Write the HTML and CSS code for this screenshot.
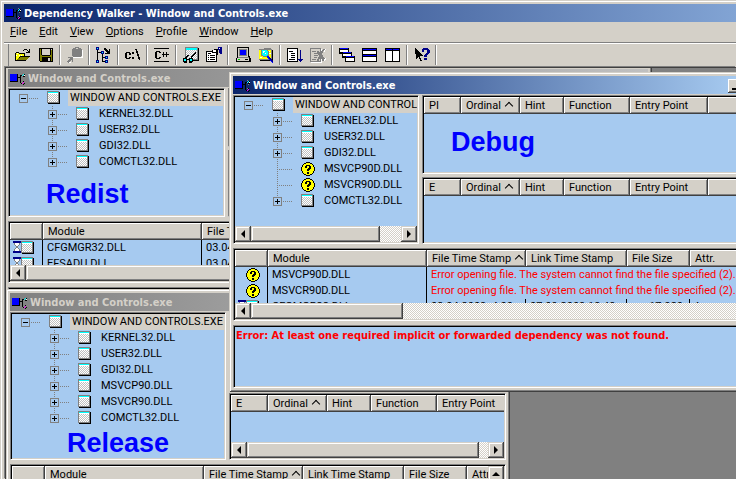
FILE: index.html
```html
<!DOCTYPE html>
<html lang="en">
<head>
<meta charset="utf-8">
<title>Dependency Walker - Window and Controls.exe</title>
<link rel="stylesheet" href="styles.css">
</head>
<body>
<svg class="defs" aria-hidden="true">
  <defs>
    <pattern id="check" width="2" height="2" patternUnits="userSpaceOnUse">
      <path fill="#fff" d="M0 0h2v2h-2z"/><path fill="#c0c0c0" d="M0 0h1v1h-1zM1 1h1v1h-1z"/>
    </pattern>
    <symbol id="logo" viewBox="0 0 16 16">
      <path fill="#000" d="M0 3h8v8h-8zM8 6h3v1h-3zM10 4h1v8h-1zM11 4h1v1h-1zM11 12h1v1h-1z"/>
      <path fill="#00f" d="M0 3h7v7h-7z"/>
      <path fill="#808080" d="M12 2h1v1h-1zM12 10h1v1h-1zM13 6h1v1h-1z"/>
      <path fill="#0ff" d="M13 3h1v1h-1zM12 4h1v1h-1z"/><path fill="#fff" d="M14 4h1v1h-1z"/>
      <path fill="#000" d="M13 5h1v1h-1zM14 5h1v1h-1zM14 3h1v1h-1zM13 13h1v1h-1zM14 12h1v1h-1zM13 10h1v1h-1z"/>
      <path fill="#f0f" d="M13 11h1v1h-1zM12 12h1v1h-1z"/>
    </symbol>
    <symbol id="doc" viewBox="0 0 14 14">
      <path fill="#000" d="M1 1h12v12h-12z"/><path fill="#808080" d="M0 0h12v12h-12z"/>
      <path fill="url(#check)" d="M1 1h10v10h-10z"/><path fill="#0ff" d="M1 1h10v1h-10z"/><path fill="#fff" d="M1 2h10v1h-10z"/>
    </symbol>
    <symbol id="missing" viewBox="0 0 14 14">
      <path fill="#000" d="M5 0h4v1h2v1h1v1h1v2h1v4h-1v2h-1v1h-1v1h-2v1h-4v-1h-2v-1h-1v-1h-1v-2h-1v-4h1v-2h1v-1h1v-1h2z"/>
      <path fill="#ff0" d="M5 1h4v1h2v1h1v2h1v4h-1v2h-1v1h-2v1h-4v-1h-2v-1h-1v-2h-1v-4h1v-2h1v-1h2z"/>
      <path fill="#000" d="M5 3h4v1h1v3h-1v1h-1v1h-2v-2h1v-1h1v-2h-2v2h-2v-2h1zM6 10h2v2h-2z"/>
    </symbol>
    <symbol id="delay" viewBox="0 0 8 12">
      <path fill="#808080" d="M1 2h6v2h-1v1h-1v2h1v1h1v2h-6v-2h1v-1h1v-2h-1v-1h-1z"/>
      <path fill="#fff" d="M2 2h4v2h-1v1h-2v-1h-1zM3 7h2v1h1v2h-4v-2h1z"/>
      <path fill="#008" d="M0 0h8v2h-8zM0 10h8v2h-8z"/>
    </symbol>
    <symbol id="i-open" viewBox="0 0 16 16">
      <path fill="#000" d="M9 2h3v1h-3zM8 3h1v1h-1zM12 3h1v1h-1zM14 2h1v4h-4v-1h2v-1h1zM1 5h3v1h6v3h5v1h-1v1h-1v1h-1v1h-1v1h-11v-8h1z"/>
      <path fill="#ff0" d="M1 6h3v1h5v2h-4v1h-1v1h-1v1h-1v1h-1z"/><path fill="#fff" d="M2 6h1v1h-1zM1 8h1v1h-1zM4 8h1v1h-1zM6 8h1v1h-1z"/>
      <path fill="#808000" d="M5 10h9v1h-1v1h-1v1h-10v-1h1v-1h2z"/>
    </symbol>
    <symbol id="i-save" viewBox="0 0 16 16">
      <path fill="#000" d="M1 1h14v14h-13v-1h-1z"/><path fill="#808000" d="M2 2h12v12h-12z"/>
      <path fill="#000" d="M3 2h1v6h-1zM12 2h1v6h-1zM4 8h8v1h-8zM4 10h9v4h-9z"/><path fill="#d4d0c8" d="M4 2h8v6h-8zM10 11h2v3h-2zM13 2h1v1h-1z"/>
    </symbol>
    <symbol id="i-profile" viewBox="0 0 16 16">
      <path fill="#fff" d="M5 10h10v1h-10zM15 3h1v8h-1zM1 16h3v-1h-3z"/>
      <path fill="#808080" d="M6 1h2v-1h4v1h2v1h1v7h-1v1h-8v-1h-1v-7h1zM1 10h5v5h-1v-2h-1v1h-1v1h-1v1h-1v-1h-1v-1h1v-1h1v-1h1v-1h-2z"/>
      <path fill="#d4d0c8" d="M9 1h2v1h-2z"/>
    </symbol>
    <symbol id="i-tree" viewBox="0 0 16 16">
      <path fill="#000" d="M1 3h1v12h-1zM1 5h4v1h-4zM6 7h1v7h-1zM6 10h4v1h-4zM6 14h4v1h-4zM8 1h2v1h1v1h1v1h1v-2h1v5h-5v-1h2v-1h-1v-1h-1v-1h-1z"/>
      <path fill="#008" d="M0 0h3v3h-3zM5 4h3v3h-3zM9 9h3v3h-3zM9 13h3v3h-3zM0 13h3v3h-3z"/>
      <path fill="#0ff" d="M1 1h1v1h-1zM6 5h1v1h-1zM10 10h1v1h-1zM10 14h1v1h-1zM1 14h1v1h-1z"/>
    </symbol>
    <symbol id="i-path" viewBox="0 0 16 16">
      <path fill="#000" d="M1 5h4v1h1v2h-2v-2h-2v5h2v-1h2v1h-1v1h-4v-1h-1v-5h1zM7 5h2v2h-2zM7 10h2v2h-2zM10 2h2v2h1v3h1v3h1v3h-1v-1h-1v-3h-1v-3h-1v-3h-1z"/>
    </symbol>
    <symbol id="i-cpp" viewBox="0 0 17 16">
      <path fill="#000" d="M0 1h16v1h-16zM0 14h16v1h-16zM2 4h4v1h1v1h-2v-1h-2v6h2v-1h2v1h-1v1h-4v-1h-1v-6h1zM8 7h2v-2h1v2h1v1h-1v2h-1v-2h-2zM12 7h1v-2h1v2h2v1h-2v2h-1v-2h-1z"/>
    </symbol>
    <symbol id="i-full" viewBox="0 0 16 16">
      <path fill="#000" d="M15 1h1v13h-9v-1h8z"/><path fill="#808080" d="M2 0h13v13h-13z"/><path fill="url(#check)" d="M3 3h11v9h-11z"/><path fill="#0ff" d="M3 1h11v2h-11z"/>
      <path fill="#000" d="M12 5h1v2h-1v1h-1v1h-1v1h-1v1h-1v-2h1v-1h1v-1h1v-1h1zM4 8h2v1h-1v1h-1v1h-2v-1h1v-1h1zM0 11h4v1h2v-1h4v4h-1v1h-3v-3h-2v3h-3v-1h-1z"/>
      <path fill="#0ff" d="M1 12h2v2h-2zM7 12h2v2h-2z"/>
    </symbol>
    <symbol id="i-props" viewBox="0 0 16 16">
      <path fill="#000" d="M0 4h6v-1h2v-1h4v6h-1v7h-11z"/><path fill="#fff" d="M1 5h5v1h4v8h-9zM7 3h3v2h-3z"/>
      <path fill="#000" d="M2 6h3v1h-3zM2 8h1v1h-1zM4 8h5v1h-5zM2 10h1v1h-1zM4 10h5v1h-5zM2 12h1v1h-1zM4 12h5v1h-5zM7 5h2v1h-2zM6 4h1v1h-1z"/>
      <path fill="#008" d="M12 0h4v7h-2v-1h-1v-3h-1z"/><path fill="#fff" d="M13 1h1v1h-1z"/>
    </symbol>
    <symbol id="i-pc" viewBox="0 0 16 16">
      <path fill="#000" d="M2 0h12v9h1v2h1v4h-15v-4h1z"/><path fill="#d4d0c8" d="M3 1h10v9h-10zM2 11h12v3h-12z"/><path fill="#808080" d="M4 2h8v7h-8zM3 10h11v1h-11z"/>
      <path fill="#00f" d="M5 3h6v5h-6z"/><path fill="#000" d="M10 12h3v1h-3z"/><path fill="#0c0" d="M3 12h2v1h-2z"/>
    </symbol>
    <symbol id="i-search" viewBox="0 0 16 16">
      <path fill="#000" d="M14 3h1v11h-13v-1h12z"/><path fill="#808080" d="M1 2h5v-1h7v1h1v11h-13z"/><path fill="#ff0" d="M1 3h12v9h-12z"/><path fill="#fff" d="M10 4h2v1h-2zM11 6h2v1h-2zM2 10h2v1h-2z"/>
      <path fill="#808080" d="M4 2h5v1h1v1h1v5h-1v1h-5v-1h-2v-6h1z"/><path fill="#0ff" d="M4 3h5v1h1v4h-1v1h-4v-1h-1z"/><path fill="#fff" d="M5 4h2v1h-1v1h-1zM7 6h1v1h-1z"/>
      <path fill="#00f" d="M9 9h2v1h1v1h1v1h1v1h1v3h-1v-1h-1v-1h-1v-1h-1v-1h-1v-1h-1z"/><path fill="#008" d="M11 10h1v1h1v1h1v1h1v2h-1v-1h-1v-1h-1v-1h-1z"/>
    </symbol>
    <symbol id="i-expand" viewBox="0 0 16 16">
      <path fill="#000" d="M0 1h11v14h-11z"/><path fill="#fff" d="M1 2h9v12h-9z"/><path fill="#000" d="M2 4h4v1h-4zM4 6h4v1h-4zM4 8h4v1h-4zM4 10h4v1h-4zM2 12h6v1h-6z"/>
      <path fill="#008" d="M13 3h1v9h2v1h-1v1h-1v1h-1v-1h-1v-1h-1v-1h2z"/>
    </symbol>
    <symbol id="i-noexp" viewBox="0 0 16 16">
      <path fill="#fff" d="M1 2h11v14h-11zM14 2h2v1h-1v2h-1zM13 11h3v2h-1v1h-2z"/><path fill="#808080" d="M0 1h11v14h-11z"/><path fill="#d4d0c8" d="M1 2h9v12h-9z"/>
      <path fill="#808080" d="M2 4h4v1h-4zM4 6h3v1h-3zM4 8h4v1h-4zM4 10h3v1h-3zM2 12h4v1h-4zM7 4h2v1h1v1h1v-2h1v-1h1v-1h2v1h-1v1h-1v2h-1v2h1v2h1v1h1v1h-1v2h-2v-2h-1v-2h-1v2h-1v2h-2v-2h1v-2h1v-2h-1v-1h-1z"/>
    </symbol>
    <symbol id="i-cascade" viewBox="0 0 16 16">
      <path fill="#000" d="M0 1h10v6h-10zM3 5h10v6h-10zM6 9h10v6h-10z"/><path fill="#fff" d="M1 3h8v2h-8zM4 7h8v2h-8zM7 11h8v3h-8z"/><path fill="#00f" d="M1 1h8v1h-8zM4 5h8v1h-8zM7 9h8v1h-8z"/>
    </symbol>
    <symbol id="i-rows" viewBox="0 0 16 16">
      <path fill="#000" d="M0 1h15v14h-15z"/><path fill="#fff" d="M1 4h13v3h-13zM1 10h13v4h-13z"/><path fill="#00f" d="M1 2h13v1h-13zM1 8h13v1h-13z"/>
    </symbol>
    <symbol id="i-cols" viewBox="0 0 16 16">
      <path fill="#000" d="M0 1h15v14h-15z"/><path fill="#fff" d="M1 4h6v10h-6zM8 4h6v10h-6z"/><path fill="#00f" d="M1 2h6v1h-6zM8 2h6v1h-6z"/>
    </symbol>
    <symbol id="i-help" viewBox="0 0 16 16">
      <path fill="#000" d="M1 1h1v1h1v1h1v1h1v1h1v1h1v1h1v1h1v1h-3v2h1v2h1v1h-2v-2h-1v-2h-1v1h-1v1h-1z"/>
      <path fill="#008" d="M9 1h5v1h1v1h1v3h-1v1h-1v1h-1v2h-3v-2h1v-1h1v-1h1v-3h-3v2h-2v-3h1zM10 11h3v2h-3z"/>
    </symbol>
  </defs>
</svg>

<main class="app">
  <header class="title app-title"><svg class="logo"><use href="#logo"/></svg><h1>Dependency Walker - Window and Controls.exe</h1></header>
  <nav class="menu">
    <button><u>F</u>ile</button><button><u>E</u>dit</button><button><u>V</u>iew</button><button><u>O</u>ptions</button><button><u>P</u>rofile</button><button><u>W</u>indow</button><button><u>H</u>elp</button>
  </nav>
  <div class="toolbar">
    <button aria-label="Open"><svg><use href="#i-open"/></svg></button><button aria-label="Save"><svg><use href="#i-save"/></svg></button><i class="sep"></i>
    <button aria-label="Start profiling" disabled><svg><use href="#i-profile"/></svg></button><i class="sep"></i>
    <button aria-label="Auto expand"><svg><use href="#i-tree"/></svg></button><i class="sep"></i>
    <button aria-label="Full paths"><svg><use href="#i-path"/></svg></button><i class="sep"></i>
    <button aria-label="Undecorate C++ functions"><svg><use href="#i-cpp"/></svg></button><i class="sep"></i>
    <button aria-label="External viewer"><svg><use href="#i-full"/></svg></button><button aria-label="Properties"><svg><use href="#i-props"/></svg></button><i class="sep"></i>
    <button aria-label="System information"><svg><use href="#i-pc"/></svg></button><button aria-label="Search order"><svg><use href="#i-search"/></svg></button><i class="sep"></i>
    <button aria-label="Next match"><svg><use href="#i-expand"/></svg></button><button aria-label="Clear log" disabled><svg><use href="#i-noexp"/></svg></button><i class="sep"></i>
    <button aria-label="Cascade"><svg><use href="#i-cascade"/></svg></button><button aria-label="Tile horizontally"><svg><use href="#i-rows"/></svg></button><button aria-label="Tile vertically"><svg><use href="#i-cols"/></svg></button><i class="sep"></i>
    <button aria-label="Context help"><svg><use href="#i-help"/></svg></button><i class="sep"></i>
  </div>

  <div class="desktop">
    <section class="window redist">
      <header class="title"><svg class="logo"><use href="#logo"/></svg><h2>Window and Controls.exe</h2><button class="cap" aria-label="Minimize"></button><button class="cap" aria-label="Maximize"></button><button class="cap close" aria-label="Close"></button></header>
      <div class="upper">
        <div class="pane tree-pane">
          <ul class="tree">
            <li><div class="node"><button class="exp" aria-label="Collapse"></button><i class="dots"></i><svg><use href="#doc"/></svg><span class="selected">WINDOW AND CONTROLS.EXE</span></div>
              <ul>
                <li class="node"><button class="exp plus" aria-label="Expand"></button><i class="dots"></i><svg><use href="#doc"/></svg><span>KERNEL32.DLL</span></li>
                <li class="node"><button class="exp plus" aria-label="Expand"></button><i class="dots"></i><svg><use href="#doc"/></svg><span>USER32.DLL</span></li>
                <li class="node"><button class="exp plus" aria-label="Expand"></button><i class="dots"></i><svg><use href="#doc"/></svg><span>GDI32.DLL</span></li>
                <li class="node"><button class="exp plus" aria-label="Expand"></button><i class="dots"></i><svg><use href="#doc"/></svg><span>COMCTL32.DLL</span></li>
              </ul>
            </li>
          </ul>
          <strong class="note">Redist</strong>
        </div>
        <div class="side"><div class="pane"></div><div class="pane"></div></div>
      </div>
      <div class="pane">
        <div class="view">
          <table class="modules">
            <colgroup><col class="c-icon"><col class="c-module"><col class="c-file"><col class="c-link"><col class="c-size"><col></colgroup>
            <thead><tr><th></th><th>Module</th><th>File Time Stamp <b class="sort"></b></th><th></th><th></th><th></th></tr></thead>
            <tbody>
              <tr><td><svg class="delay"><use href="#delay"/></svg><svg><use href="#doc"/></svg></td><td>CFGMGR32.DLL</td><td>03.04.2008</td><td></td><td></td><td></td></tr>
              <tr><td><svg class="delay"><use href="#delay"/></svg><svg><use href="#doc"/></svg></td><td>EFSADU.DLL</td><td>03.04.2008</td><td></td><td></td><td></td></tr>
            </tbody>
          </table>
        </div>
        <div class="scroll"><button class="arrow left" aria-label="Scroll left"></button><i class="thumb"></i><button class="arrow right" aria-label="Scroll right"></button></div>
      </div>
      <div class="pane"></div>
    </section>

    <section class="window release">
      <header class="title"><svg class="logo"><use href="#logo"/></svg><h2>Window and Controls.exe</h2></header>
      <div class="upper">
        <div class="pane tree-pane">
          <ul class="tree">
            <li><div class="node"><button class="exp" aria-label="Collapse"></button><i class="dots"></i><svg><use href="#doc"/></svg><span class="selected">WINDOW AND CONTROLS.EXE</span></div>
              <ul>
                <li class="node"><button class="exp plus" aria-label="Expand"></button><i class="dots"></i><svg><use href="#doc"/></svg><span>KERNEL32.DLL</span></li>
                <li class="node"><button class="exp plus" aria-label="Expand"></button><i class="dots"></i><svg><use href="#doc"/></svg><span>USER32.DLL</span></li>
                <li class="node"><button class="exp plus" aria-label="Expand"></button><i class="dots"></i><svg><use href="#doc"/></svg><span>GDI32.DLL</span></li>
                <li class="node"><button class="exp plus" aria-label="Expand"></button><i class="dots"></i><svg><use href="#doc"/></svg><span>MSVCP90.DLL</span></li>
                <li class="node"><button class="exp plus" aria-label="Expand"></button><i class="dots"></i><svg><use href="#doc"/></svg><span>MSVCR90.DLL</span></li>
                <li class="node"><button class="exp plus" aria-label="Expand"></button><i class="dots"></i><svg><use href="#doc"/></svg><span>COMCTL32.DLL</span></li>
              </ul>
            </li>
          </ul>
          <strong class="note">Release</strong>
        </div>
        <div class="side">
          <div class="pane"></div>
          <div class="pane">
            <div class="view">
              <table class="functions">
                <colgroup><col class="c-kind"><col class="c-ordinal"><col class="c-hint"><col class="c-function"><col class="c-entry"><col></colgroup>
                <thead><tr><th>E</th><th>Ordinal <b class="sort"></b></th><th>Hint</th><th>Function</th><th>Entry Point</th><th></th></tr></thead>
              </table>
            </div>
            <div class="scroll"><button class="arrow left" aria-label="Scroll left"></button><i class="thumb"></i><button class="arrow right" aria-label="Scroll right"></button></div>
          </div>
        </div>
      </div>
      <div class="pane with-vscroll">
        <div class="view">
          <table class="modules">
            <colgroup><col class="c-icon"><col class="c-module"><col class="c-file"><col class="c-link"><col class="c-size"><col></colgroup>
            <thead><tr><th></th><th>Module</th><th>File Time Stamp <b class="sort"></b></th><th>Link Time Stamp</th><th>File Size</th><th>Attr.</th></tr></thead>
          </table>
        </div>
        <div class="vscroll"><button class="arrow up" aria-label="Scroll up"></button></div>
      </div>
    </section>

    <section class="window active debug">
      <header class="title"><svg class="logo"><use href="#logo"/></svg><h2>Window and Controls.exe</h2><button class="cap min" aria-label="Minimize"></button><button class="cap" aria-label="Maximize"></button><button class="cap close" aria-label="Close"></button></header>
      <div class="upper">
        <div class="pane tree-pane">
          <ul class="tree view">
            <li><div class="node"><button class="exp" aria-label="Collapse"></button><i class="dots"></i><svg><use href="#doc"/></svg><span class="selected">WINDOW AND CONTROLS.EXE</span></div>
              <ul>
                <li class="node"><button class="exp plus" aria-label="Expand"></button><i class="dots"></i><svg><use href="#doc"/></svg><span>KERNEL32.DLL</span></li>
                <li class="node"><button class="exp plus" aria-label="Expand"></button><i class="dots"></i><svg><use href="#doc"/></svg><span>USER32.DLL</span></li>
                <li class="node"><button class="exp plus" aria-label="Expand"></button><i class="dots"></i><svg><use href="#doc"/></svg><span>GDI32.DLL</span></li>
                <li class="node leaf"><i class="dots"></i><svg><use href="#missing"/></svg><span>MSVCP90D.DLL</span></li>
                <li class="node leaf"><i class="dots"></i><svg><use href="#missing"/></svg><span>MSVCR90D.DLL</span></li>
                <li class="node"><button class="exp plus" aria-label="Expand"></button><i class="dots"></i><svg><use href="#doc"/></svg><span>COMCTL32.DLL</span></li>
              </ul>
            </li>
          </ul>
          <div class="scroll"><button class="arrow left" aria-label="Scroll left"></button><i class="thumb"></i><button class="arrow right" aria-label="Scroll right"></button></div>
        </div>
        <div class="side">
          <div class="pane">
            <div class="view">
              <table class="functions">
                <colgroup><col class="c-kind"><col class="c-ordinal"><col class="c-hint"><col class="c-function"><col class="c-entry"><col></colgroup>
                <thead><tr><th>PI</th><th>Ordinal <b class="sort"></b></th><th>Hint</th><th>Function</th><th>Entry Point</th><th></th></tr></thead>
              </table>
            </div>
            <strong class="note">Debug</strong>
          </div>
          <div class="pane">
            <div class="view">
              <table class="functions">
                <colgroup><col class="c-kind"><col class="c-ordinal"><col class="c-hint"><col class="c-function"><col class="c-entry"><col></colgroup>
                <thead><tr><th>E</th><th>Ordinal <b class="sort"></b></th><th>Hint</th><th>Function</th><th>Entry Point</th><th></th></tr></thead>
              </table>
            </div>
          </div>
        </div>
      </div>
      <div class="pane">
        <div class="view">
          <table class="modules">
            <colgroup><col class="c-icon"><col class="c-module"><col class="c-file"><col class="c-link"><col class="c-size"><col></colgroup>
            <thead><tr><th></th><th>Module</th><th>File Time Stamp <b class="sort"></b></th><th>Link Time Stamp</th><th>File Size</th><th>Attr.</th></tr></thead>
            <tbody>
              <tr><td><svg class="alone"><use href="#missing"/></svg></td><td>MSVCP90D.DLL</td><td class="error" colspan="4">Error opening file. The system cannot find the file specified (2).</td></tr>
              <tr><td><svg class="alone"><use href="#missing"/></svg></td><td>MSVCR90D.DLL</td><td class="error" colspan="4">Error opening file. The system cannot find the file specified (2).</td></tr>
              <tr><td><svg class="delay"><use href="#delay"/></svg><svg><use href="#doc"/></svg></td><td>CFGMGR32.DLL</td><td>03.04.2008  4:00</td><td>07.09.2008 18:48</td><td class="num">17.920</td><td>A</td></tr>
            </tbody>
          </table>
        </div>
        <div class="scroll"><button class="arrow left" aria-label="Scroll left"></button><i class="thumb"></i><button class="arrow right" aria-label="Scroll right"></button></div>
      </div>
      <div class="pane log"><p>Error: At least one required implicit or forwarded dependency was not found.</p></div>
    </section>
  </div>
</main>
</body>
</html>
```
FILE: styles.css
```css
:root {
  --face: #d4d0c8;
  --shade: #808080;
  --dark: #404040;
  --paper: #a6caf0;
  --bold-face: "DejaVu Sans Condensed", "DejaVu Sans", sans-serif;
}
* { box-sizing: border-box; }
html, body { height: 100%; margin: 0; }
body {
  overflow: hidden;
  background: var(--face);
  color: #000;
  font: 11px/16px Roboto, "DejaVu Sans", sans-serif;
}
button { margin: 0; padding: 0; border: 0; background: none; color: inherit; font: inherit; }
h1, h2, p, ul { margin: 0; padding: 0; font-size: inherit; list-style: none; }
svg { display: block; flex: none; shape-rendering: crispEdges; }
.defs { position: absolute; width: 0; height: 0; }

/* Application frame */
.app {
  display: flex;
  flex-direction: column;
  height: 100%;
  padding: 4px 0 0 4px;
  box-shadow: inset 1px 1px var(--face), inset 2px 2px #fff;
}
.title {
  display: flex;
  flex: none;
  align-items: center;
  height: 18px;
  padding: 1px 2px 0;
  background: linear-gradient(90deg, #808080, #c0c0c0);
  color: var(--face);
  font-family: var(--bold-face);
  white-space: nowrap;
}
.title h1, .title h2 { flex: 1; font-weight: bold; }
.app-title { background: linear-gradient(90deg, #0a246a, #82a4d4); color: #fff; }
.logo { width: 16px; height: 16px; margin-right: 2px; }
.menu { display: flex; flex: none; height: 20px; }
.menu button { padding: 0 6px; }
.toolbar {
  display: flex;
  flex: none;
  align-items: center;
  height: 24px;
  padding-left: 7px;
  border-top: 1px solid var(--shade);
  box-shadow: inset 0 1px #fff, inset 4px 0 var(--face), inset 5px 0 var(--shade);
}
.toolbar button { display: flex; flex: none; justify-content: center; width: 23px; }
.toolbar svg { width: 16px; height: 16px; }
.sep { flex: none; width: 6px; height: 20px; border: solid var(--face); border-width: 0 2px; background: linear-gradient(90deg, var(--shade) 50%, #fff 50%); }

/* Child windows */
.desktop {
  position: relative;
  flex: 1;
  min-height: 0;
  margin: 1px 0 0 1px;
  overflow: hidden;
  border: solid var(--dark);
  border-width: 1px 0 0 1px;
  background: var(--shade);
  box-shadow: -1px -1px var(--shade);
}
.window {
  position: absolute;
  display: grid;
  padding: 4px;
  background: var(--face);
  box-shadow: inset 1px 1px var(--face), inset -1px -1px var(--dark), inset 2px 2px #fff, inset -2px -2px var(--shade);
}
.window > .title { margin-bottom: 1px; }
.window > .upper, .window > .upper ~ .pane:not(:last-child) { margin-bottom: 4px; }
.active > .title { background: linear-gradient(90deg, #0a246a, #a6caf0 92%); color: #fff; }
.redist { left: -2px; top: -3px; width: 648px; grid-template-rows: 19px 133px 66px 40px; }
.release { left: 0; top: 221px; width: 504px; grid-template-rows: 19px 152px 80px; }
.debug { left: 223px; top: 4px; width: 555px; grid-template-rows: 19px 153px 77px 63px; }
.cap {
  width: 16px;
  height: 14px;
  background: var(--face);
  box-shadow: inset -1px -1px var(--dark), inset 1px 1px #fff, inset -2px -2px var(--shade);
}
.cap.min::before { content: ""; display: block; width: 6px; height: 2px; margin: 7px 0 0 4px; background: #000; }
.close { margin-left: 2px; }

/* Sunken panes */
.upper { display: grid; gap: 3px; min-height: 0; }
.redist .upper { grid-template-columns: 217px 1fr; }
.release .upper { grid-template-columns: 216px 1fr; }
.debug .upper { grid-template-columns: 186px 1fr; }
.side { display: grid; grid-template-rows: 1fr 67px; gap: 3px; min-width: 0; }
.pane {
  position: relative;
  display: flex;
  flex-direction: column;
  min-width: 0;
  min-height: 0;
  padding: 1px;
  overflow: hidden;
  border: 1px solid;
  border-color: var(--shade) #fff #fff var(--shade);
  background: var(--paper);
  box-shadow: inset 1px 1px #000, inset -1px -1px var(--face);
}
.with-vscroll { flex-direction: row; }
.view { flex: 1; min-width: 0; min-height: 0; overflow: hidden; }
.note { position: absolute; color: #00f; font: bold 27px/32px "Liberation Sans", Arial, sans-serif; }
.redist .note { left: 37px; top: 89px; }
.release .note { left: 56px; top: 114px; }
.debug .note { left: 28px; top: 30px; }
.log p { padding: 1px 1px 0; color: #f00; font-family: var(--bold-face); font-weight: bold; white-space: nowrap; }

/* Module tree */
.node { display: flex; align-items: center; height: 16px; padding-left: 9px; white-space: nowrap; }
.node svg { width: 14px; height: 14px; margin: 0 7px 0 8px; }
.node span { padding: 0 2px; }
.node .selected { background: var(--face); }
.tree ul { background: repeating-linear-gradient(var(--shade) 0 1px, transparent 1px 2px) 42px 0 / 1px calc(100% - 8px) no-repeat; }
.tree ul .node { padding-left: 38px; }
.tree ul .leaf { padding-left: 43px; }
.exp {
  flex: none;
  width: 9px;
  height: 9px;
  border: 1px solid var(--shade);
  background: linear-gradient(#000, #000) 1px 3px / 5px 1px no-repeat var(--paper);
}
.plus { background: linear-gradient(#000, #000) 1px 3px / 5px 1px no-repeat, linear-gradient(#000, #000) 3px 1px / 1px 5px no-repeat var(--paper); }
.dots { flex: none; width: 11px; height: 1px; background: repeating-linear-gradient(90deg, transparent 0 1px, var(--shade) 1px 2px); }
.leaf .dots { width: 15px; }

/* Lists */
table { width: 100%; border-collapse: separate; border-spacing: 0; table-layout: fixed; }
.modules { min-width: 497px; }
.functions { min-width: 300px; }
.c-icon { width: 33px; }
.c-module { width: 159px; }
.c-file { width: 99px; }
.c-link { width: 101px; }
.c-size { width: 63px; }
.c-kind { width: 37px; }
.c-ordinal { width: 59px; }
.c-hint { width: 44px; }
.c-function { width: 66px; }
.c-entry { width: 78px; }
th {
  height: 17px;
  padding: 1px 0 0 5px;
  background: var(--face);
  box-shadow: inset -1px -1px var(--dark), inset 1px 1px #fff, inset -2px -2px var(--shade);
  font-weight: normal;
  text-align: left;
  white-space: nowrap;
}
.sort { display: inline-block; width: 6px; height: 6px; margin-left: 2px; border: solid #000; border-width: 1px 0 0 1px; transform: rotate(45deg); }
td { height: 16px; padding: 0 0 0 4px; border-right: 1px solid #000; white-space: pre; }
td:first-child { padding-left: 3px; }
td:last-child { border-right: 0; }
td svg { display: inline-block; width: 14px; height: 14px; vertical-align: top; margin-top: 1px; }
td .delay { width: 8px; height: 12px; }
td .alone { margin-left: 8px; }
.error { color: #f00; }
.num { padding-right: 6px; text-align: right; }

/* Scroll bars */
.scroll, .vscroll {
  display: flex;
  flex: none;
  background: repeating-conic-gradient(#fff 0 25%, var(--face) 0 50%) 0 0 / 2px 2px;
}
.scroll { height: 16px; }
.vscroll { flex-direction: column; width: 16px; }
.arrow, .thumb {
  flex: none;
  background: var(--face);
  box-shadow: inset -1px -1px var(--dark), inset 1px 1px var(--face), inset -2px -2px var(--shade), inset 2px 2px #fff;
}
.arrow { display: grid; place-items: center; width: 16px; height: 16px; }
.arrow::before { content: ""; border: 4px solid transparent; }
.left::before { border-right-color: #000; border-left-width: 0; }
.right::before { border-left-color: #000; border-right-width: 0; }
.up::before { border-bottom-color: #000; border-top-width: 0; }
.right { margin-left: auto; }
.redist .thumb { width: 420px; }
.release .thumb { width: 232px; }
.debug .thumb { width: 152px; }
.debug .tree-pane .thumb { width: 129px; }
```
